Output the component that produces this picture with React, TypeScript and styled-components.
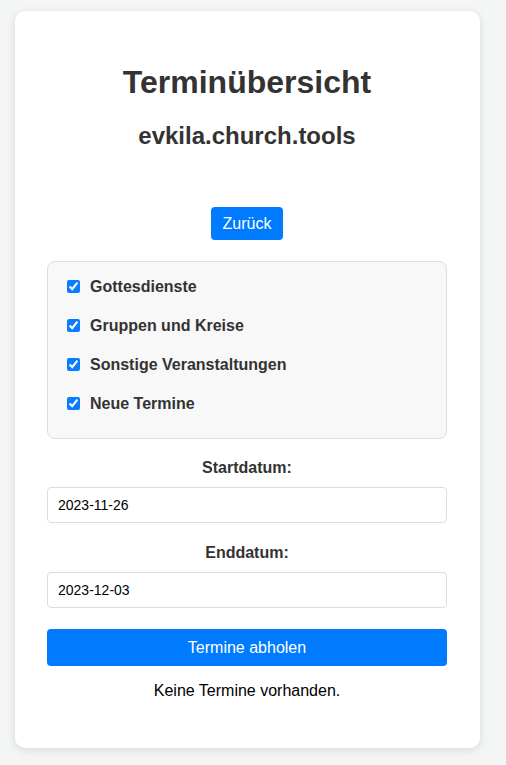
import React, { useState } from "react";
import styled, { createGlobalStyle } from "styled-components";

const Global = createGlobalStyle`
  html, body { margin: 0; padding: 0; }
  body {
    background: #f4f6f5;
    font-family: "Liberation Sans", Arial, Helvetica, sans-serif;
  }
  * { box-sizing: border-box; }
`;

const Page = styled.div`
  padding: 11px 26px 17px 15px;
`;

const Card = styled.div`
  width: 465px;
  background: #ffffff;
  border-radius: 10px;
  box-shadow: 0 2px 8px rgba(0, 0, 0, 0.12);
  padding: 32px 33px 32px 32px;
  display: flex;
  flex-direction: column;
  align-items: stretch;
`;

const Title = styled.h1`
  margin: 21px 0 0 0;
  font-size: 32px;
  font-weight: 700;
  line-height: 37px;
  color: #333333;
  text-align: center;
`;

const Subtitle = styled.h2`
  margin: 21px 0 0 0;
  font-size: 24px;
  font-weight: 700;
  line-height: 28px;
  color: #333333;
  text-align: center;
`;

const CenterRow = styled.div`
  display: flex;
  justify-content: center;
  margin-top: 57px;
`;

const Button = styled.button<{ $block?: boolean }>`
  background: #007bff;
  color: #ffffff;
  border: none;
  border-radius: 4px;
  font-family: inherit;
  font-size: 16px;
  line-height: 18px;
  cursor: pointer;
  padding: ${(p) => (p.$block ? "10px 12px 9px" : "8px 12px 7px")};
  width: ${(p) => (p.$block ? "100%" : "auto")};
`;

const Panel = styled.div`
  margin-top: 21px;
  background: #f8f8f8;
  border: 1px solid #dddddd;
  border-radius: 8px;
  padding: 15px 15px 25px 15px;
  display: flex;
  flex-direction: column;
  gap: 20px;
`;

const CheckRow = styled.label`
  display: flex;
  align-items: center;
  height: 19px;
  font-size: 16px;
  font-weight: 700;
  color: #333333;
  cursor: pointer;
`;

const Check = styled.input`
  width: 13px;
  height: 13px;
  margin: 0 10px 0 4px;
  accent-color: #0a7cff;
`;

const FieldLabel = styled.label<{ $gap: number }>`
  display: block;
  margin-top: ${(p) => p.$gap}px;
  text-align: center;
  font-size: 16px;
  font-weight: 700;
  line-height: 18px;
  color: #333333;
`;

const TextInput = styled.input`
  display: block;
  width: 100%;
  height: 36px;
  margin-top: 10px;
  padding: 0 10px;
  border: 1px solid #dddddd;
  border-radius: 4px;
  font-family: inherit;
  font-size: 14px;
  color: #000000;
  background: #ffffff;
  outline: none;
`;

const ButtonWrap = styled.div`
  margin-top: 21px;
`;

const Message = styled.p`
  margin: 16px 0 16px 0;
  text-align: center;
  font-size: 16px;
  line-height: 18px;
  color: #000000;
`;

const categories = [
  "Gottesdienste",
  "Gruppen und Kreise",
  "Sonstige Veranstaltungen",
  "Neue Termine",
];

export default function App() {
  const [checked, setChecked] = useState<boolean[]>(categories.map(() => true));
  const [start, setStart] = useState("2023-11-26");
  const [end, setEnd] = useState("2023-12-03");

  return (
    <>
      <Global />
      <Page>
        <Card>
          <Title>Terminübersicht</Title>
          <Subtitle>evkila.church.tools</Subtitle>
          <CenterRow>
            <Button>Zurück</Button>
          </CenterRow>
          <Panel>
            {categories.map((c, i) => (
              <CheckRow key={c}>
                <Check
                  type="checkbox"
                  checked={checked[i]}
                  onChange={() =>
                    setChecked((prev) => prev.map((v, j) => (j === i ? !v : v)))
                  }
                />
                {c}
              </CheckRow>
            ))}
          </Panel>
          <FieldLabel $gap={20} htmlFor="start">Startdatum:</FieldLabel>
          <TextInput id="start" type="text" value={start} onChange={(e) => setStart(e.target.value)} />
          <FieldLabel $gap={21} htmlFor="end">Enddatum:</FieldLabel>
          <TextInput id="end" type="text" value={end} onChange={(e) => setEnd(e.target.value)} />
          <ButtonWrap>
            <Button $block>Termine abholen</Button>
          </ButtonWrap>
          <Message>Keine Termine vorhanden.</Message>
        </Card>
      </Page>
    </>
  );
}
